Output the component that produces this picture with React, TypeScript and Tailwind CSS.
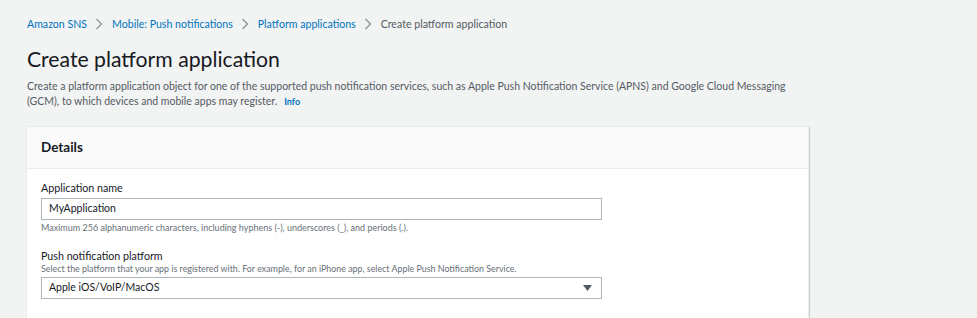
const crumbs = ['Amazon SNS', 'Mobile: Push notifications', 'Platform applications']

const Chevron = () => (
  <svg width="8" height="12" viewBox="0 0 8 12" className="ml-[8px] mr-[9px] shrink-0">
    <path d="M1.5 1 L6.5 6 L1.5 11" fill="none" stroke="#879596" strokeWidth="1.3" />
  </svg>
)

export default function App() {
  return (
    <div
      className="min-h-screen bg-[#f2f3f3] text-[#16191f] pl-[27px] pt-[16px]"
      style={{ fontFamily: 'Lato, "Noto Sans", Arial, sans-serif' }}
    >
      {/* breadcrumb */}
      <nav className="flex items-center h-[16px] text-[10.6px] leading-[16px]">
        {crumbs.map((c) => (
          <span key={c} className="flex items-center">
            <a className="text-[#0073bb]">{c}</a>
            <Chevron />
          </span>
        ))}
        <span className="text-[#545b64]">Create platform application</span>
      </nav>

      {/* header */}
      <h1 className="mt-[13px] text-[21.2px] leading-[28px] font-normal">Create platform application</h1>
      <p className="mt-[6px] text-[10.5px] leading-[15px] text-[#545b64]">
        Create a platform application object for one of the supported push notification services, such as Apple Push Notification Service (APNS) and Google Cloud Messaging
        <br />
        (GCM), to which devices and mobile apps may register.
        <a className="ml-[7px] text-[9px] font-bold text-[#0073bb]">Info</a>
      </p>

      {/* details card */}
      <section className="mt-[17px] ml-[-1px] w-[783px] bg-white border border-[#eaeded] shadow-[1px_1px_1px_0_rgba(0,28,36,0.15)]">
        <div className="h-[42px] flex items-center px-[14px] bg-[#fafafa] border-b border-[#eaeded]">
          <h2 className="text-[13.5px] font-bold">Details</h2>
        </div>
        <div className="px-[14px] pt-[11px] pb-[20px]">
          <label className="block text-[10.7px] leading-[15px]">Application name</label>
          <div className="mt-[3px] w-[561px] h-[22px] flex items-center px-[7px] border border-[#aab7b8] text-[10.5px]">
            MyApplication
          </div>
          <p className="mt-[2px] text-[9px] leading-[12px] text-[#687078]">
            Maximum 256 alphanumeric characters, including hyphens (-), underscores (_), and periods (.).
          </p>

          <label className="block mt-[15px] text-[10.7px] leading-[14px]">Push notification platform</label>
          <p className="text-[8.9px] leading-[11px] text-[#687078]">
            Select the platform that your app is registered with. For example, for an iPhone app, select Apple Push Notification Service.
          </p>
          <div className="mt-[3px] w-[561px] h-[22px] flex items-center justify-between px-[7px] border border-[#aab7b8] text-[10.5px]">
            <span>Apple iOS/VoIP/MacOS</span>
            <svg width="9" height="6" viewBox="0 0 9 6" className="mr-[2px]">
              <path d="M0 0 H9 L4.5 6 Z" fill="#545b64" />
            </svg>
          </div>
        </div>
      </section>
    </div>
  )
}
